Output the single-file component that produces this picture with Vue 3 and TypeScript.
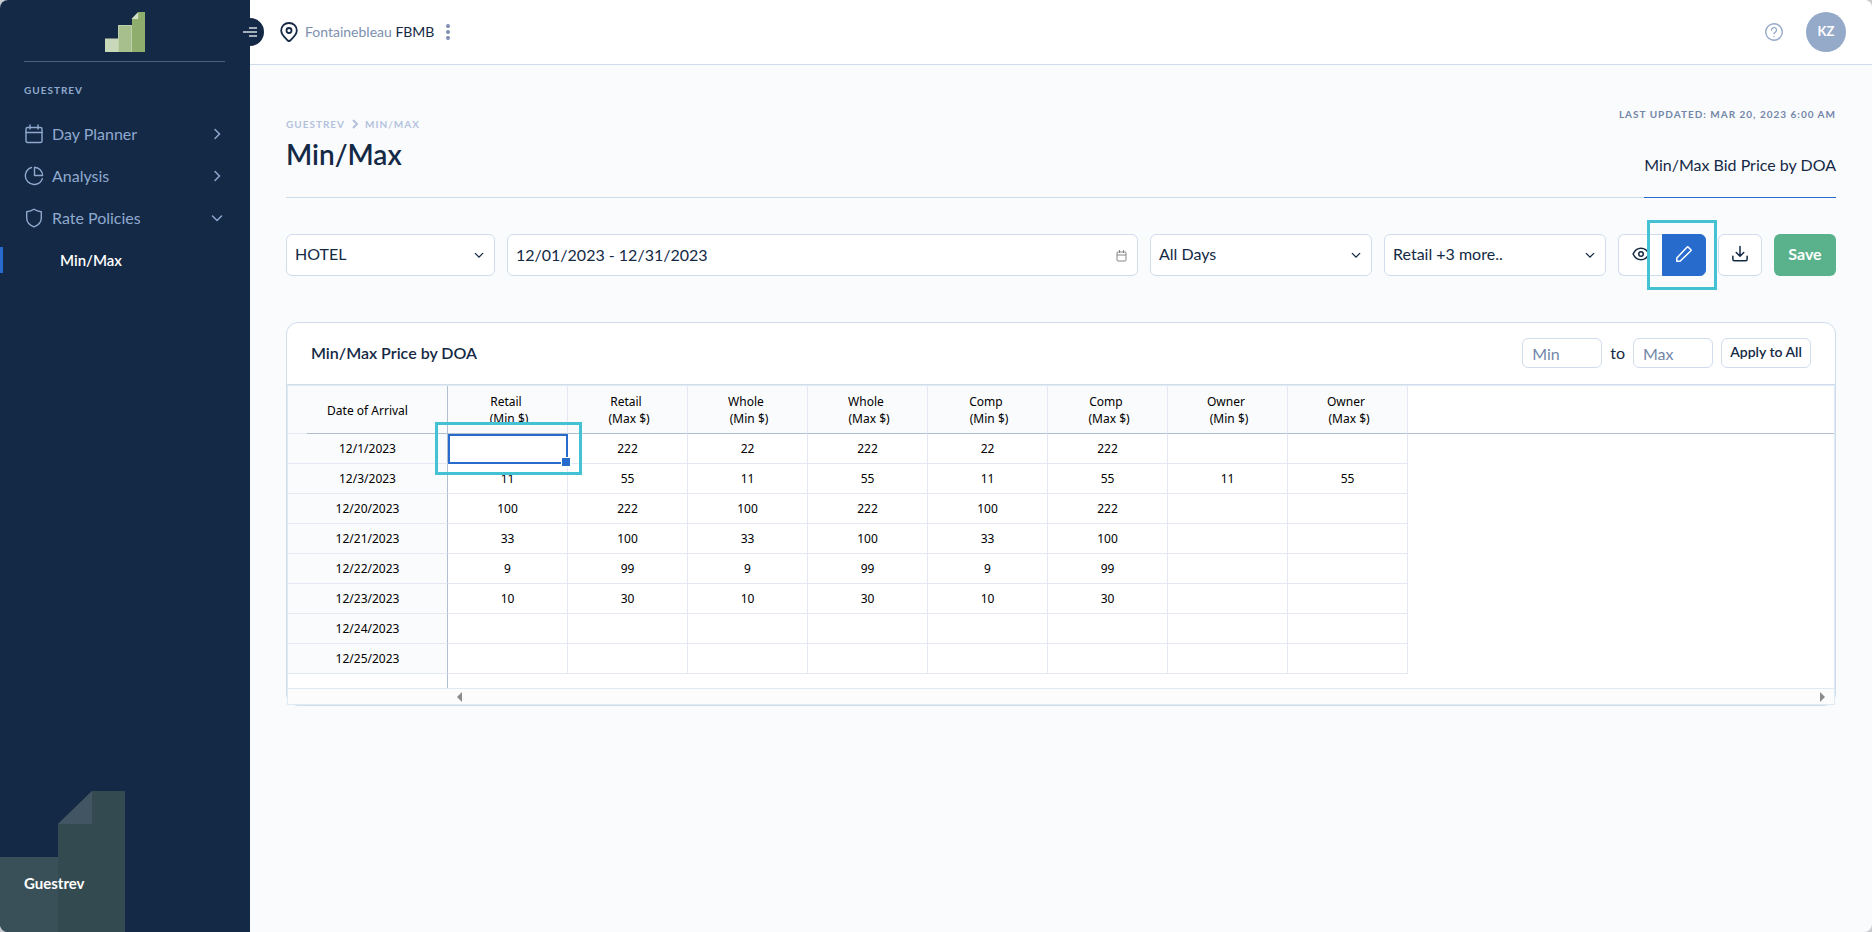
<script setup lang="ts">
import { ref } from 'vue'

interface NavItem {
  label: string
  icon: 'calendar' | 'pie' | 'shield'
  open: boolean
}

interface PriceRow {
  date: string
  prices: (number | null)[]
}

const navItems: NavItem[] = [
  { label: 'Day Planner', icon: 'calendar', open: false },
  { label: 'Analysis', icon: 'pie', open: false },
  { label: 'Rate Policies', icon: 'shield', open: true },
]

const segments = ['Retail', 'Whole', 'Comp', 'Owner']
const columns = segments.flatMap((s) => [`${s} \n (Min $)`, `${s} \n (Max $)`])

const blank = (): null[] => Array(8).fill(null)

const rows: PriceRow[] = [
  { date: '12/1/2023', prices: [null, 222, 22, 222, 22, 222, null, null] },
  { date: '12/3/2023', prices: [11, 55, 11, 55, 11, 55, 11, 55] },
  { date: '12/20/2023', prices: [100, 222, 100, 222, 100, 222, null, null] },
  { date: '12/21/2023', prices: [33, 100, 33, 100, 33, 100, null, null] },
  { date: '12/22/2023', prices: [9, 99, 9, 99, 9, 99, null, null] },
  { date: '12/23/2023', prices: [10, 30, 10, 30, 10, 30, null, null] },
  { date: '12/24/2023', prices: blank() },
  { date: '12/25/2023', prices: blank() },
]

const hotel = ref('HOTEL')
const dateRange = ref('12/01/2023 - 12/31/2023')
const days = ref('All Days')
const segment = ref('Retail +3 more..')
const minPrice = ref('')
const maxPrice = ref('')
</script>

<template>
  <div class="app">
    <aside class="sidebar">
      <div class="brand">
        <svg width="40" height="40" viewBox="0 0 40 40" role="img" aria-label="Logo">
          <path d="M0 26.5h13V40H0z" fill="#c9d8b9" />
          <path d="M13 13h14v27H13z" fill="#a6bf8c" />
          <path d="M13.5 40V13.5H26.5V40" fill="none" stroke="#bfd1ab" />
          <path d="M27 6.5 33.500 0H40v40H27z" fill="#8fad6c" />
          <path d="M26.500 7 33.200 0V7z" fill="#d3e0c6" />
        </svg>
      </div>
      <h2 class="nav-title">GUESTREV</h2>
      <nav class="nav">
        <button v-for="item in navItems" :key="item.label" class="nav-item" type="button" :aria-expanded="item.open">
          <svg v-if="item.icon === 'calendar'" class="line-icon" width="20" height="20" viewBox="0 0 20 20">
            <rect x="2" y="3.500" width="16" height="15" rx="1.500" />
            <path d="M2 8.500h16M6 1v4M14 1v4" />
          </svg>
          <svg v-else-if="item.icon === 'pie'" class="line-icon" width="20" height="20" viewBox="0 0 20 20">
            <path d="M7.500 1.500A8.700 8.700 0 1 0 18.300 12.700" />
            <path d="M10.500 1.200A8.500 8.500 0 0 1 18.600 9.500H10.500z" />
          </svg>
          <svg v-else class="line-icon" width="20" height="20" viewBox="0 0 20 20">
            <path d="M10 1.300C12 2.800 14.500 3.600 17.300 3.700V10c0 4.300-3.300 7.300-7.300 8.900C6 17.300 2.700 14.300 2.700 10V3.700C5.500 3.600 8 2.800 10 1.300z" />
          </svg>
          <span class="nav-label">{{ item.label }}</span>
          <svg class="chevron" width="12" height="12" viewBox="0 0 12 12">
            <path :d="item.open ? 'M1.500 4 6 8.500 10.500 4' : 'M4 1.500 8.500 6 4 10.500'" />
          </svg>
        </button>
        <a class="nav-sub" href="#" aria-current="page">Min/Max</a>
      </nav>
      <div class="sidebar-foot">
        <svg class="foot-art" width="125" height="141" viewBox="0 0 125 141" aria-hidden="true">
          <path d="M0 66h58v75H0z" fill="#3a5058" />
          <path d="M58 33 92 0h33v141H58z" fill="#334b50" />
          <path d="M58 33 92 0v33z" fill="#415562" />
        </svg>
        <strong class="foot-name">Guestrev</strong>
      </div>
    </aside>

    <div class="main">
      <header class="topbar">
        <button class="toggle" type="button" aria-label="Toggle menu">
          <svg width="14" height="10" viewBox="0 0 14 10">
            <path d="M6 1h8M0 5h14M6 9h8" stroke="#d3dae4" stroke-width="1.700" />
          </svg>
        </button>
        <svg class="pin" width="18" height="20" viewBox="0 0 18 20" aria-hidden="true">
          <path d="M9 1C4.500 1 1.200 4.300 1.200 8.500c0 4.200 3.800 7.200 6.600 10a1.700 1.700 0 0 0 2.400 0c2.800-2.800 6.600-5.800 6.600-10C16.800 4.300 13.500 1 9 1z" />
          <circle cx="9" cy="8.500" r="2.500" />
        </svg>
        <p class="place">Fontainebleau <b>FBMB</b></p>
        <button class="icon-btn" type="button" aria-label="More">
          <svg width="4" height="16" viewBox="0 0 4 16" fill="#7d8fb0">
            <circle cx="2" cy="2" r="2" /><circle cx="2" cy="8" r="2" /><circle cx="2" cy="14" r="2" />
          </svg>
        </button>
        <button class="icon-btn help" type="button" aria-label="Help">
          <svg width="18" height="18" viewBox="0 0 18 18" fill="none" stroke="#95a9c9" stroke-linecap="round">
            <circle cx="9" cy="9" r="8.300" stroke-width="1.400" />
            <path d="M6.500 7a2.500 2.500 0 1 1 3.800 2.100C9.400 9.600 9 9.900 9 10.800M9 13.300v.2" stroke-width="1.300" />
          </svg>
        </button>
        <button class="avatar" type="button">KZ</button>
      </header>

      <main class="content">
        <div class="page-head">
          <div>
            <nav class="crumbs" aria-label="Breadcrumb">
              <a href="#">GUESTREV</a>
              <svg width="6" height="10" viewBox="0 0 6 10" fill="none" stroke="#b3c2dc" stroke-width="2">
                <path d="M1 1l4 4-4 4" />
              </svg>
              <a href="#">MIN/MAX</a>
            </nav>
            <h1>Min/Max</h1>
          </div>
          <div class="head-side">
            <p class="updated">LAST UPDATED: MAR 20, 2023 6:00 AM</p>
            <a class="tab" href="#">Min/Max Bid Price by DOA</a>
          </div>
        </div>

        <form class="filters" @submit.prevent>
          <div class="field">
            <select v-model="hotel" aria-label="Hotel"><option>HOTEL</option></select>
            <svg class="chevron" width="10" height="10" viewBox="0 0 12 12"><path d="M1.500 4 6 8.500 10.500 4" /></svg>
          </div>
          <div class="field">
            <input v-model="dateRange" type="text" aria-label="Date range" />
            <svg class="date-icon" width="11" height="12" viewBox="0 0 11 12">
              <rect x="1" y="2" width="9" height="9" rx="1" /><path d="M1 5h9M3.500 0v3M7.500 0v3" />
            </svg>
          </div>
          <div class="field">
            <select v-model="days" aria-label="Days"><option>All Days</option></select>
            <svg class="chevron" width="10" height="10" viewBox="0 0 12 12"><path d="M1.500 4 6 8.500 10.500 4" /></svg>
          </div>
          <div class="field">
            <select v-model="segment" aria-label="Segment"><option>Retail +3 more..</option></select>
            <svg class="chevron" width="10" height="10" viewBox="0 0 12 12"><path d="M1.500 4 6 8.500 10.500 4" /></svg>
          </div>
          <div class="modes">
            <button class="tool view" type="button" aria-label="View">
              <svg width="18" height="18" viewBox="0 0 24 24">
                <path d="M1.500 12C3.500 7.500 7.500 4.300 12 4.300s8.500 3.200 10.500 7.700c-2 4.500-6 7.700-10.500 7.700S3.500 16.500 1.500 12z" />
                <circle cx="12" cy="12" r="3" />
              </svg>
            </button>
            <button class="tool edit" type="button" aria-label="Edit" aria-pressed="true">
              <svg width="16" height="16" viewBox="0 0 16 16">
                <path d="M.800 15.200V12L11.200 1.100Q11.700.600 12.200 1.100L14.900 3.800Q15.400 4.300 14.900 4.800L4 15.200z" />
              </svg>
            </button>
          </div>
          <button class="tool download" type="button" aria-label="Download">
            <svg width="18" height="18" viewBox="0 0 24 24">
              <path d="M21.500 15v4a2 2 0 0 1-2 2h-15a2 2 0 0 1-2-2v-4M7 10l5 5 5-5M12 15V2" />
            </svg>
          </button>
          <button class="save" type="submit">Save</button>
        </form>

        <section class="card">
          <header class="card-head">
            <h3>Min/Max Price by DOA</h3>
            <form class="bulk" @submit.prevent>
              <input v-model="minPrice" type="text" placeholder="Min" aria-label="Minimum price" />
              <span>to</span>
              <input v-model="maxPrice" type="text" placeholder="Max" aria-label="Maximum price" />
              <button type="submit">Apply to All</button>
            </form>
          </header>
          <div class="sheet">
            <table>
              <thead>
                <tr>
                  <th class="date-col" scope="col">Date of Arrival</th>
                  <th v-for="name in columns" :key="name" class="price-col" scope="col">{{ name }}</th>
                  <td class="rest"></td>
                </tr>
              </thead>
              <tbody>
                <tr v-for="(row, r) in rows" :key="row.date">
                  <th class="date-col" scope="row">{{ row.date }}</th>
                  <td v-for="(price, c) in row.prices" :key="c" :class="{ selected: r === 0 && c === 0 }">{{ price }}</td>
                  <td class="rest"></td>
                </tr>
              </tbody>
            </table>
            <div class="sheet-gap"></div>
            <div class="scrollbar">
              <button type="button" aria-label="Scroll left">
                <svg width="5" height="10" viewBox="0 0 5 10"><path d="M5 0v10L0 5z" fill="#8b8b8b" /></svg>
              </button>
              <button type="button" aria-label="Scroll right">
                <svg width="5" height="10" viewBox="0 0 5 10"><path d="M0 0v10l5-5z" fill="#8b8b8b" /></svg>
              </button>
            </div>
          </div>
        </section>
      </main>
    </div>
  </div>
</template>

<style>
html {
  background: #c9cbce;
}
body {
  margin: 0;
}
</style>

<style scoped>
* {
  box-sizing: border-box;
}
h1,
h2,
h3,
p {
  margin: 0;
}
button,
input,
select {
  font: inherit;
  color: inherit;
}
button {
  padding: 0;
  border: 0;
  background: none;
  cursor: pointer;
}
a {
  color: inherit;
  text-decoration: none;
}
svg {
  display: block;
  flex: none;
}
.app {
  display: flex;
  min-height: 100vh;
  border-radius: 8px;
  overflow: hidden;
  background: #fafbfd;
  color: #142945;
  font: 16px/20px Lato, "Liberation Sans", sans-serif;
}

/* Sidebar */
.sidebar {
  display: flex;
  flex-direction: column;
  flex: none;
  width: 250px;
  background: #142945;
  color: #8fa9cf;
}
.brand {
  display: flex;
  justify-content: center;
  margin: 0 25px 0 24px;
  padding: 12px 0 9px;
  border-bottom: 1px solid #4b6384;
}
.nav-title {
  margin: 18px 24px 13px;
  font-size: 10px;
  line-height: 20px;
  letter-spacing: 1px;
}
.nav-item {
  display: flex;
  align-items: center;
  gap: 8px;
  width: 100%;
  height: 42px;
  padding: 0 27px 0 24px;
  text-align: left;
}
.nav-label {
  flex: 1;
}
.line-icon {
  fill: none;
  stroke: #8fa9cf;
  stroke-width: 1.4;
  stroke-linecap: round;
  stroke-linejoin: round;
}
.chevron {
  fill: none;
  stroke: currentColor;
  stroke-width: 1.5;
  stroke-linecap: round;
}
.nav-sub {
  display: block;
  margin: 8px 0;
  padding-left: 57px;
  border-left: 3px solid #276ccd;
  color: #fff;
  font-size: 15px;
  font-weight: 600;
  line-height: 26px;
}
.sidebar-foot {
  position: relative;
  margin-top: auto;
}
.foot-name {
  position: absolute;
  left: 24px;
  bottom: 39px;
  color: #fff;
  font-size: 15px;
  line-height: 20px;
}

/* Top bar */
.main {
  flex: 1;
  min-width: 0;
}
.topbar {
  display: flex;
  align-items: center;
  height: 65px;
  padding-right: 26px;
  border-bottom: 1px solid #cddcea;
  background: #fff;
}
.toggle {
  display: flex;
  align-items: center;
  justify-content: center;
  width: 28px;
  height: 28px;
  margin-left: -14px;
  border-radius: 50%;
  background: #142945;
}
.pin {
  margin: 0 7px 0 16px;
  fill: none;
  stroke: #142945;
  stroke-width: 1.8;
}
.place {
  margin-right: 12px;
  color: #7d8fb0;
  font-size: 14px;
}
.place b {
  color: #142945;
  font-weight: 400;
}
.help {
  margin-left: auto;
}
.avatar {
  width: 40px;
  height: 40px;
  margin-left: 23px;
  padding-bottom: 2px;
  border-radius: 50%;
  background: #95a9c9;
  color: #fff;
  font-size: 13px;
  font-weight: 700;
}

/* Page heading */
.content {
  padding: 39px 36px;
}
.page-head {
  display: flex;
  justify-content: space-between;
  border-bottom: 1px solid #cddcea;
}
.crumbs {
  display: flex;
  align-items: center;
  gap: 7px;
  padding-top: 10px;
  color: #b3c2dc;
  font-size: 10px;
  font-weight: 700;
  letter-spacing: 1px;
}
h1 {
  margin-top: 4px;
  font-size: 28px;
  font-weight: 600;
  line-height: 32px;
}
.head-side {
  display: flex;
  flex-direction: column;
  align-items: flex-end;
  margin-bottom: -1px;
}
.updated {
  color: #7386a8;
  font-size: 10px;
  font-weight: 700;
  letter-spacing: 1px;
}
.tab {
  margin-top: 31px;
  padding-bottom: 22px;
  border-bottom: 1px solid #276ccd;
}

/* Filters */
.filters {
  display: grid;
  grid-template-columns: 209fr 631fr 222fr 222fr auto auto auto;
  gap: 12px;
  margin-top: 36px;
}
.field {
  position: relative;
  min-width: 0;
}
.field select,
.field input {
  display: block;
  width: 100%;
  height: 42px;
  padding: 0 32px 2px 8px;
  border: 1px solid #d0dded;
  border-radius: 6px;
  background: #fff;
  appearance: none;
}
.field .chevron,
.field .date-icon {
  position: absolute;
  top: 16px;
  right: 11px;
  pointer-events: none;
}
.date-icon {
  fill: none;
  stroke: #868686;
}
.modes {
  display: flex;
}
.tool {
  display: flex;
  align-items: center;
  justify-content: center;
  width: 44px;
  height: 42px;
  padding-bottom: 2px;
  border: 1px solid #d0dded;
  border-radius: 6px;
  background: #fff;
}
.tool svg {
  fill: none;
  stroke: #142945;
  stroke-width: 2;
  stroke-linecap: round;
  stroke-linejoin: round;
}
.view {
  border-right: 0;
  border-radius: 6px 0 0 6px;
}
.edit {
  position: relative;
  border-color: #276ccd;
  border-radius: 0 6px 6px 0;
  background: #276ccd;
}
.edit svg {
  stroke: #fff;
  stroke-width: 1.5;
}
.edit::after {
  content: "";
  position: absolute;
  inset: -15px -12px -15px -16px;
  border: 3px solid #45c1d4;
  pointer-events: none;
}
.save {
  width: 62px;
  padding-bottom: 2px;
  border-radius: 6px;
  background: #59b28c;
  color: #fff;
  font-weight: 700;
}

/* Price sheet */
.card {
  margin-top: 46px;
  border: 1px solid #d0dded;
  border-radius: 12px;
  background: #fff;
}
.card-head {
  display: flex;
  align-items: center;
  justify-content: space-between;
  padding: 15px 24px 16px;
  border-bottom: 1px solid #d0dded;
}
h3 {
  padding-bottom: 1px;
  font-size: 16px;
  font-weight: 600;
}
.bulk {
  display: flex;
  align-items: center;
  gap: 8px;
}
.bulk input,
.bulk button {
  width: 80px;
  height: 30px;
  padding: 0 9px;
  border: 1px solid #d0dded;
  border-radius: 6px;
  background: #fff;
}
.bulk input::placeholder {
  color: #7386a8;
  opacity: 1;
}
.bulk button {
  width: 90px;
  padding: 0 0 2px;
  font-size: 14px;
  font-weight: 600;
}
.sheet {
  border: 1px solid #e1e9f5;
  color: #000;
  font-family: "Noto Sans", "Open Sans", sans-serif;
  font-size: 12px;
  line-height: 17px;
}
table {
  width: 100%;
  table-layout: fixed;
  border-spacing: 0;
}
th,
td {
  height: 30px;
  padding: 0;
  border-right: 1px solid #e4e8f3;
  border-bottom: 1px solid #e4e8f3;
  font-weight: 400;
  text-align: center;
}
th {
  background: #fafbfd;
}
.date-col {
  width: 160px;
  border-right-color: #b0bfd2;
}
thead th,
thead td {
  height: 48px;
  border-bottom-color: #b0bfd2;
}
thead .date-col {
  border-bottom: 0;
  background: linear-gradient(to right, #e4e8f3 19px, #b0bfd2 19px) 0 100% / 100% 1px no-repeat #fafbfd;
}
.price-col {
  width: 120px;
  white-space: pre;
}
.rest {
  border-right: 0;
}
tbody .rest {
  border-bottom: 0;
}
.selected {
  position: relative;
  outline: 2px solid #276ccd;
  outline-offset: -2px;
}
.selected::before {
  content: "";
  position: absolute;
  z-index: 1;
  right: -4px;
  bottom: -4px;
  width: 8px;
  height: 8px;
  border: 1px solid #fff;
  background: #276ccd;
}
.selected::after {
  content: "";
  position: absolute;
  inset: -12px -15px -12px -13px;
  border: 3px solid #45c1d4;
  pointer-events: none;
}
.sheet-gap {
  width: 160px;
  height: 14px;
  border-right: 1px solid #b0bfd2;
}
.scrollbar {
  display: flex;
  justify-content: space-between;
  height: 16px;
  padding: 0 9px 0 169px;
  border-top: 1px solid #e1e9f5;
  background: #fcfcfc;
}
</style>
